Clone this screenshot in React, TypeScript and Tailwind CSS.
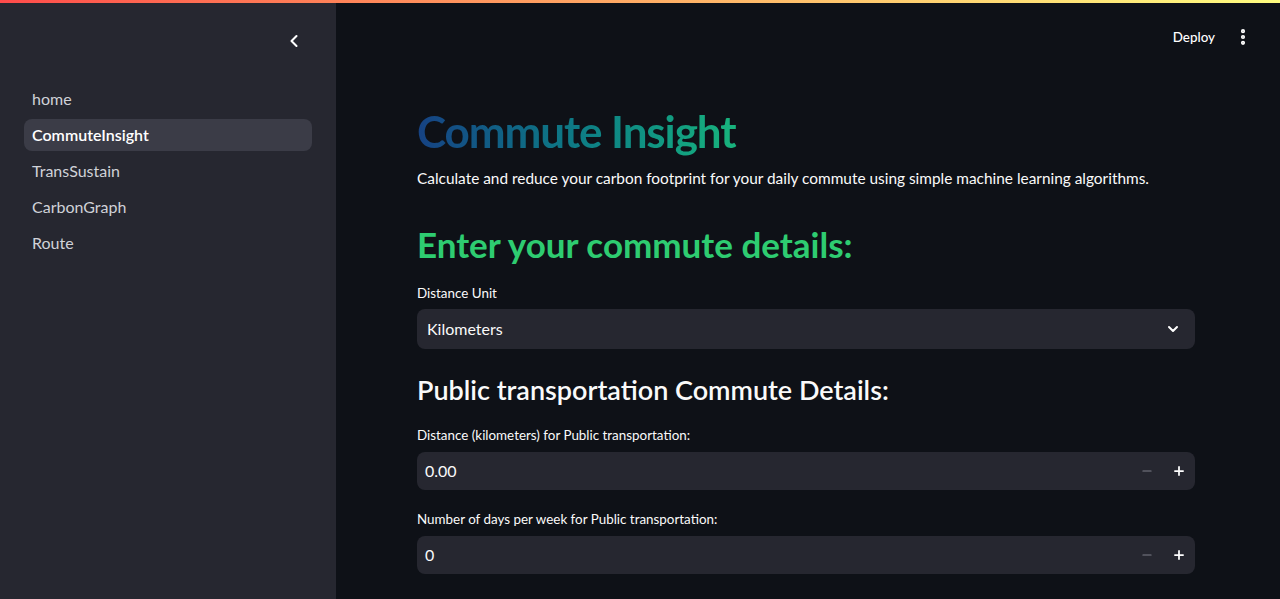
import React from "react";
import { ChevronLeft, ChevronDown, Minus, Plus, EllipsisVertical } from "lucide-react";

const pages = ["home", "CommuteInsight", "TransSustain", "CarbonGraph", "Route"];

const Sidebar = () => (
  <aside className="w-[336px] shrink-0 bg-[#262730] h-full flex flex-col">
    <div className="h-[80px] flex items-start justify-end pr-[32px] pt-[28px]">
      <ChevronLeft className="w-5 h-5 text-white" strokeWidth={2.5} />
    </div>
    <nav className="flex flex-col gap-1 px-6">
      {pages.map((p) => (
        <div
          key={p}
          className={`h-8 leading-8 px-2 rounded-lg text-base ${
            p === "CommuteInsight"
              ? "bg-[#3b3c47] text-white font-semibold"
              : "text-[#d0d2d8]"
          }`}
        >
          {p}
        </div>
      ))}
    </nav>
  </aside>
);

const NumberInput = ({ value }: { value: string }) => (
  <div className="h-[38px] flex items-center bg-[#262730] rounded-lg">
    <div className="flex-1 pl-2 text-base text-[#fafafa]">{value}</div>
    <div className="w-8 flex justify-center text-[#7c7e87]">
      <Minus className="w-3.5 h-3.5" strokeWidth={2} />
    </div>
    <div className="w-8 flex justify-center text-white">
      <Plus className="w-3.5 h-3.5" strokeWidth={3} />
    </div>
  </div>
);

const App = () => {
  return (
    <div
      className="w-[1280px] h-[599px] overflow-hidden flex flex-col bg-[#0e1117] text-[#fafafa]"
      style={{ fontFamily: "Lato, 'Noto Sans', sans-serif" }}
    >
      <div className="h-[3px] shrink-0 bg-gradient-to-r from-[#ff4b4b] to-[#fffd80]" />
      <div className="flex flex-1 min-h-0">
        <Sidebar />
        <main className="flex-1 flex flex-col">
          <header className="h-[74px] flex items-center justify-end pr-[27px] gap-[18px] -mt-[3px]">
            <span className="text-[13.4px] font-medium text-white">Deploy</span>
            <EllipsisVertical className="w-5 h-5 text-white" strokeWidth={3} />
          </header>
          <div className="w-[778px] ml-[81px] flex flex-col mt-[29px]">
            <h1 className="h-14 leading-[56px] text-[44px] font-bold tracking-tight bg-gradient-to-r from-[#164283] to-[#19b47c] bg-clip-text text-transparent w-fit pr-1">
              Commute Insight
            </h1>
            <p className="mt-[7px] h-6 leading-6 text-[15.4px]">
              Calculate and reduce your carbon footprint for your daily commute using simple machine learning algorithms.
            </p>
            <h2 className="mt-[30px] h-12 leading-[48px] text-[35px] font-bold text-[#2ecc71]">
              Enter your commute details:
            </h2>
            <label className="mt-[15px] h-5 leading-5 text-[13.4px]">Distance Unit</label>
            <div className="mt-[6px] h-10 flex items-center justify-between bg-[#262730] rounded-lg px-[10px] pr-[14px]">
              <span className="text-base">Kilometers</span>
              <ChevronDown className="w-4 h-4 text-white" strokeWidth={3} />
            </div>
            <h3 className="mt-[21px] h-10 leading-10 text-[27px] font-semibold">
              Public transportation Commute Details:
            </h3>
            <label className="mt-[15px] h-5 leading-5 text-[13.4px]">
              Distance (kilometers) for Public transportation:
            </label>
            <div className="mt-[7px]">
              <NumberInput value="0.00" />
            </div>
            <label className="mt-[19px] h-5 leading-5 text-[13.4px]">
              Number of days per week for Public transportation:
            </label>
            <div className="mt-[7px]">
              <NumberInput value="0" />
            </div>
          </div>
        </main>
      </div>
    </div>
  );
};

export default App;
